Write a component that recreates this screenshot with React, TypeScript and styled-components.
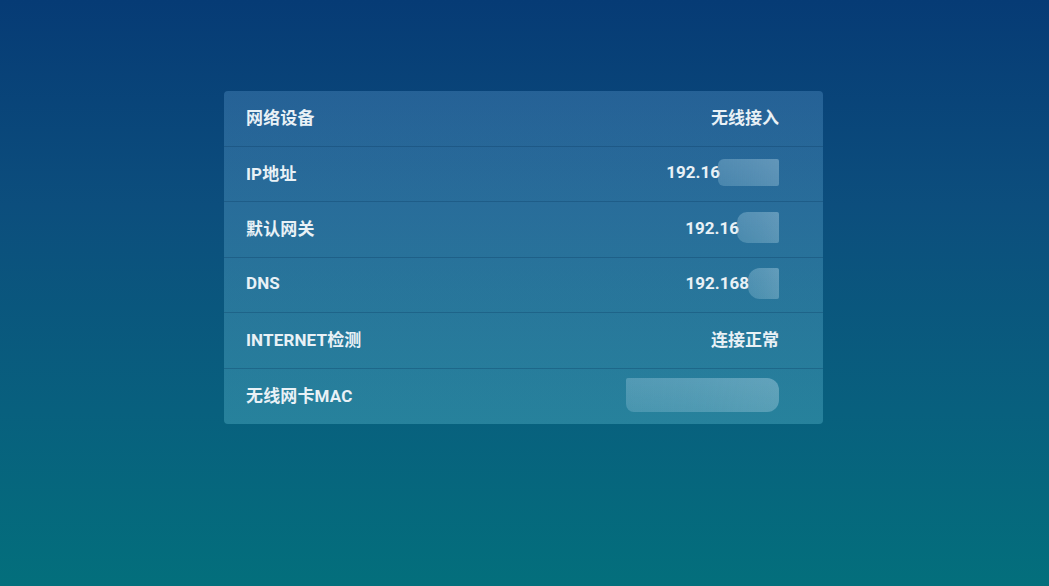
import React from "react";
import styled, { createGlobalStyle } from "styled-components";

const GlobalStyle = createGlobalStyle`
  html, body {
    margin: 0;
    padding: 0;
    width: 100%;
    height: 100%;
  }
  body {
    font-family: Roboto, "Noto Sans CJK SC", sans-serif;
  }
  #root {
    height: 100%;
  }
`;

interface Row {
  label: string;
  value?: string;
  mask?: { width: number; height: number; overlap: number; round: string };
}

const rows: Row[] = [
  { label: "网络设备", value: "无线接入" },
  { label: "IP地址", value: "192.16", mask: { width: 61, height: 27, overlap: 2, round: "6px 2px 2px 6px" } },
  { label: "默认网关", value: "192.16", mask: { width: 42, height: 31, overlap: 2, round: "10px 2px 2px 10px" } },
  { label: "DNS", value: "192.168", mask: { width: 31, height: 31, overlap: 1, round: "12px 2px 2px 12px" } },
  { label: "INTERNET检测", value: "连接正常" },
  { label: "无线网卡MAC", mask: { width: 153, height: 34, overlap: 0, round: "2px 12px 12px 8px" } },
];

const App: React.FC = () => {
  return (
    <>
      <GlobalStyle />
      <Screen>
        <Card>
          {rows.map((row) => (
            <InfoRow key={row.label}>
              <Label>{row.label}</Label>
              <Value>
                {row.value && <span>{row.value}</span>}
                {row.mask && (
                  <Mask
                    $w={row.mask.width}
                    $h={row.mask.height}
                    $overlap={row.mask.overlap}
                    $round={row.mask.round}
                  />
                )}
              </Value>
            </InfoRow>
          ))}
        </Card>
      </Screen>
    </>
  );
};

const Screen = styled.div`
  height: 586px;
  width: 100%;
  background: linear-gradient(180deg, #063b75 0%, #0c4e7d 35%, #08607e 70%, #036f7c 100%);
  padding-top: 91px;
  box-sizing: border-box;
  display: flex;
  justify-content: center;
  align-items: flex-start;
`;

const Card = styled.div`
  width: 599px;
  margin-left: -2px;
  border-radius: 4px;
  background: linear-gradient(180deg, rgba(115, 178, 230, 0.27) 0%, rgba(110, 205, 225, 0.3) 100%);
  overflow: hidden;
`;

const InfoRow = styled.div`
  height: 55.5px;
  box-sizing: border-box;
  display: flex;
  align-items: center;
  justify-content: space-between;
  padding: 0 44px 3px 22px;
  border-bottom: 1px solid rgba(10, 55, 95, 0.3);

  &:last-child {
    border-bottom: none;
  }
`;

const Label = styled.div`
  color: #e9f1f6;
  font-size: 17px;
  font-weight: 700;
  letter-spacing: 0.15px;
`;

const Value = styled.div`
  display: flex;
  align-items: center;
  color: #e9f1f6;
  font-size: 17px;
  font-weight: 700;
`;

const Mask = styled.div<{ $w: number; $h: number; $overlap: number; $round: string }>`
  width: ${(p) => p.$w}px;
  height: ${(p) => p.$h}px;
  margin-left: -${(p) => p.$overlap}px;
  border-radius: ${(p) => p.$round};
  background:
    linear-gradient(90deg, rgba(255, 255, 255, 0) 0%, rgba(255, 255, 255, 0.04) 50%, rgba(255, 255, 255, 0.09) 100%),
    linear-gradient(180deg, rgba(170, 210, 230, 0.34) 0%, rgba(160, 205, 225, 0.28) 100%);
`;

export default App;
